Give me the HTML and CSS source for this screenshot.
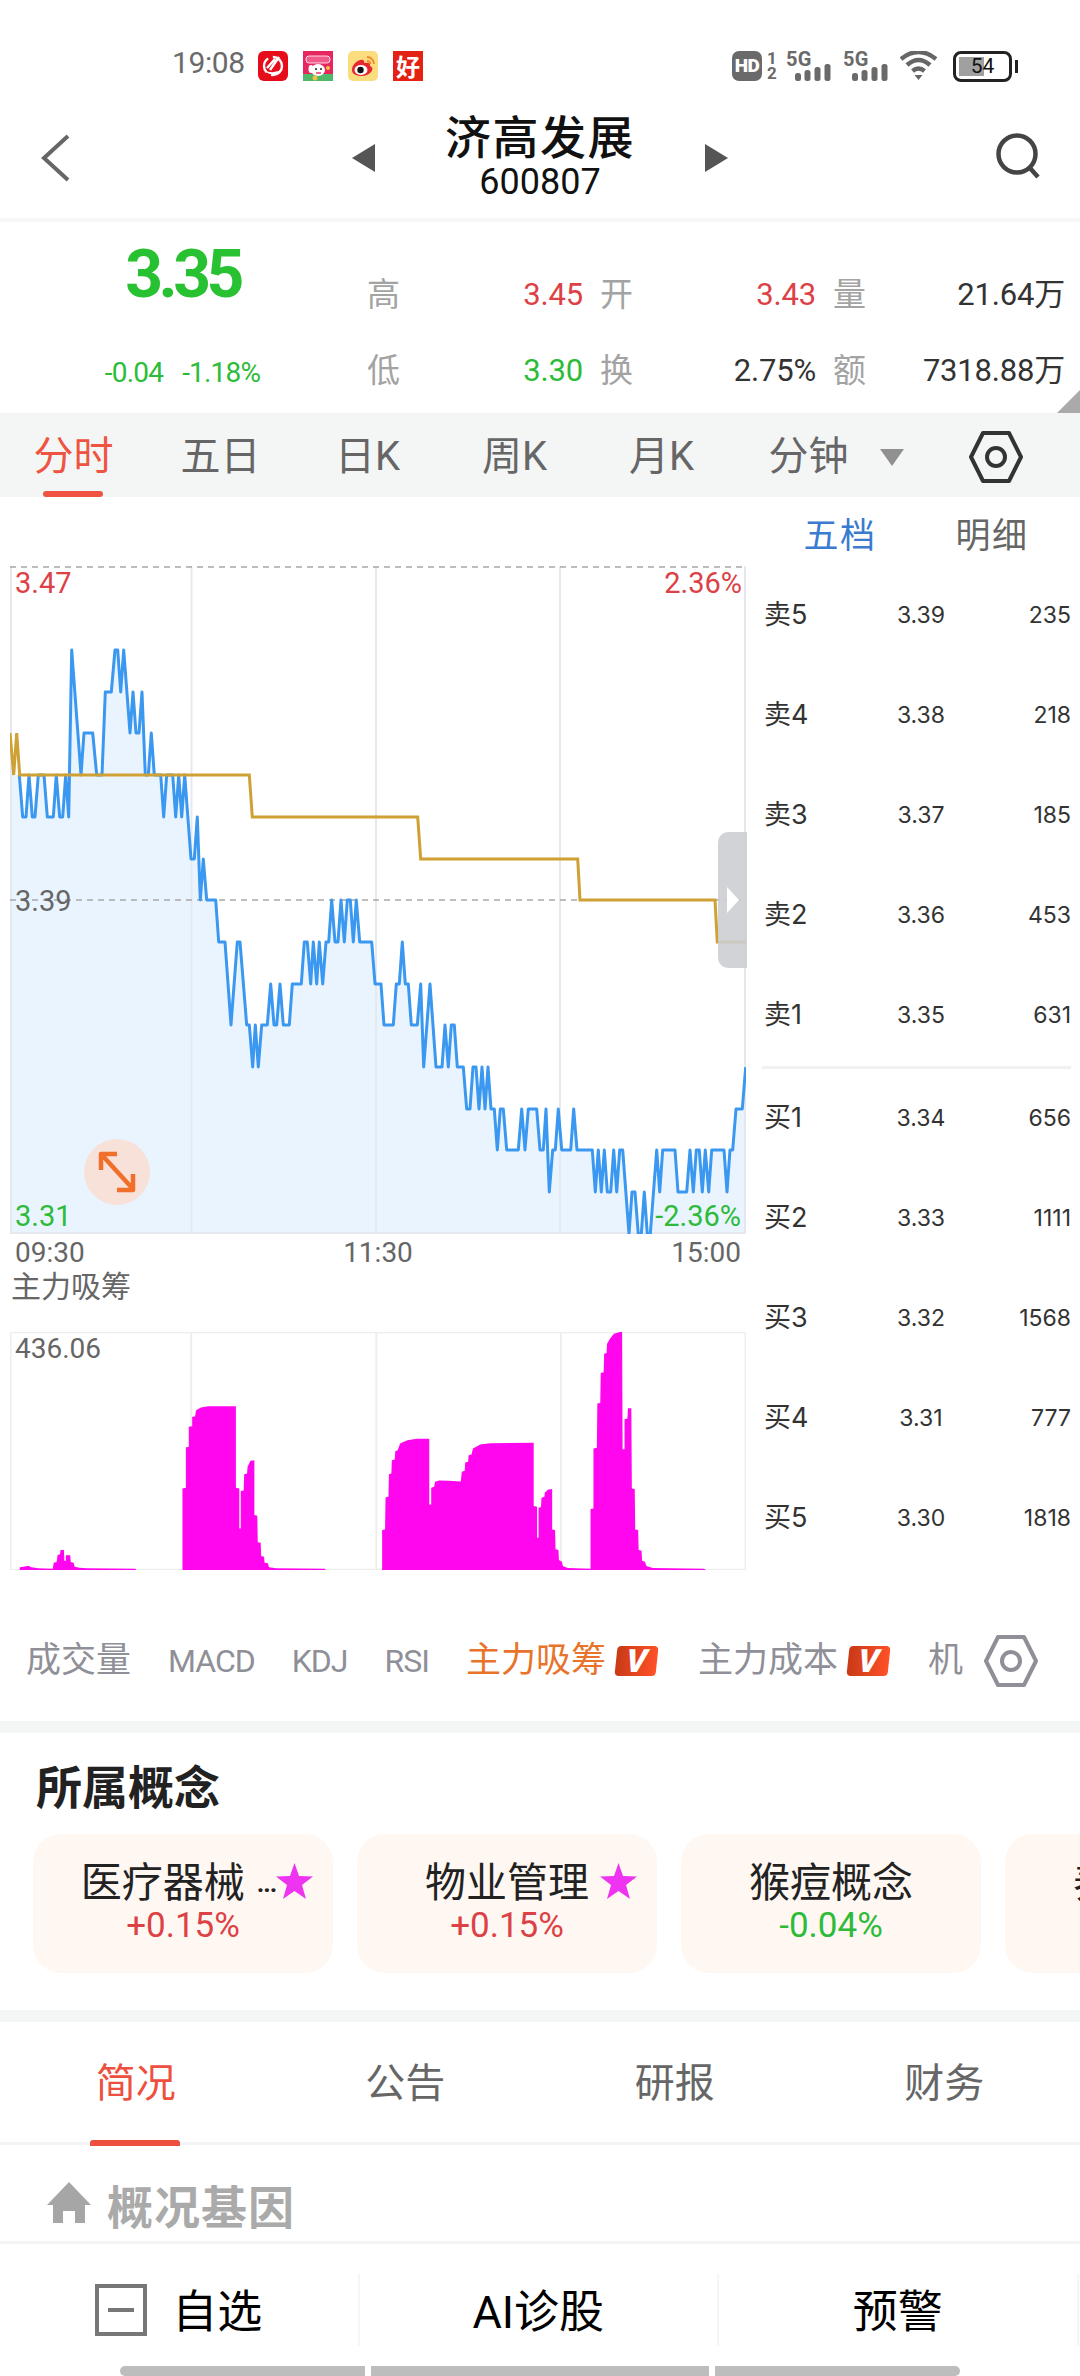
FILE: index.html
```html
<!DOCTYPE html>
<html lang="zh-CN">
<head>
<meta charset="utf-8">
<title>济高发展</title>
<link rel="stylesheet" href="styles.css">
</head>
<body>
<div class="page">
  <div class="status">
    <span class="time">19:08</span>
    <div class="apps">
      <svg class="app" viewBox="0 0 30 30"><rect width="30" height="30" rx="6" fill="#e60c1a"/><circle cx="15" cy="15" r="9" fill="none" stroke="#fff" stroke-width="2.4" stroke-dasharray="16 5"/><path d="M21 6 L12 19 M17 8 L9 17" stroke="#fff" stroke-width="2.4" fill="none"/><path d="M6 19 Q14 28 25 18 Q15 24 6 19Z" fill="#fff"/></svg>
      <svg class="app" viewBox="0 0 30 30"><rect width="30" height="30" fill="#e5265f"/><rect y="23" width="30" height="7" fill="#4fb86b"/><rect x="3" y="5" width="24" height="7" rx="3" fill="#f15a8a" stroke="#fff" stroke-width=".8"/><ellipse cx="15" cy="19" rx="7" ry="6" fill="#fff"/><ellipse cx="8" cy="18" rx="2.5" ry="4" fill="#fff"/><circle cx="13" cy="18" r="1" fill="#222"/><circle cx="18" cy="18" r="1" fill="#222"/><path d="M13 22h5" stroke="#e5265f" stroke-width="1.4"/><circle cx="12" cy="27" r="2.5" fill="#f6c143"/><circle cx="25" cy="17" r="2" fill="#f6c143"/></svg>
      <svg class="app" viewBox="0 0 30 30"><rect width="30" height="30" rx="5" fill="#fbdd80"/><path d="M4 19 C4 13 11 8 15 9 C17 10 16 12 16 12 C20 11 23 12 22 15 C25 16 25 19 23 21 C20 25 13 26 8 24 C5 23 4 21 4 19Z" fill="#e8262d"/><ellipse cx="13" cy="19" rx="6.5" ry="5" fill="#fff"/><circle cx="12.5" cy="19" r="3.2" fill="#111"/><path d="M19 6 A7 7 0 0 1 26 13 M19 10 A3.5 3.5 0 0 1 22.500 13" fill="none" stroke="#ee8a2d" stroke-width="1.800"/></svg>
      <span class="app app-hao">好</span>
    </div>
    <div class="sys">
      <span class="hd">HD</span>
      <span class="sims"><span>1</span><span>2</span></span>
      <div class="sig"><span class="sig-text">5G</span><svg class="sig-bars" viewBox="0 0 36 17"><rect x="0" y="9" width="6" height="8" rx="2.500"/><rect x="9.500" y="6" width="6" height="11" rx="2.500"/><rect x="19.500" y="3" width="6" height="14" rx="2.500"/><rect x="29.500" y="0" width="6" height="17" rx="2.500"/></svg></div>
      <div class="sig"><span class="sig-text">5G</span><svg class="sig-bars" viewBox="0 0 36 17"><rect x="0" y="9" width="6" height="8" rx="2.500"/><rect x="9.500" y="6" width="6" height="11" rx="2.500"/><rect x="19.500" y="3" width="6" height="14" rx="2.500"/><rect x="29.500" y="0" width="6" height="17" rx="2.500"/></svg></div>
      <svg class="wifi" viewBox="0 0 37 29"><path d="M1 8 Q18.500 -6 36 8" fill="none" stroke="#666" stroke-width="4.500"/><path d="M7 14 Q18.500 4 30 14" fill="none" stroke="#666" stroke-width="4.500"/><path d="M12.500 20 Q18.500 15 24.500 20" fill="none" stroke="#666" stroke-width="4.500"/><path d="M14.500 24 H22.500 L18.500 29Z" fill="#666"/></svg>
      <div class="battery-wrap">
        <div class="battery"><span class="battery-fill"></span><span class="battery-text">54</span></div>
        <span class="battery-nub"></span>
      </div>
    </div>
  </div>

  <header class="header">
    <div class="hdr-left">
      <svg class="back" viewBox="0 0 30 48"><path d="M27 2 L3 24 L27 46" fill="none" stroke="#666" stroke-width="4"/></svg>
    </div>
    <div class="hdr-mid">
      <span class="tri tri-left"></span>
      <div class="title-block">
        <div class="title">济高发展</div>
        <div class="code">600807</div>
      </div>
      <span class="tri tri-right"></span>
    </div>
    <div class="hdr-right">
      <svg class="search" viewBox="0 0 46 46"><circle cx="21" cy="21" r="18.500" fill="none" stroke="#444" stroke-width="4.500"/><path d="M33 34 L42 44" stroke="#444" stroke-width="4.500"/></svg>
    </div>
  </header>

  <section class="quote">
    <div class="quote-main">
      <div class="price">3.35</div>
      <div class="change"><span>-0.04</span><span>-1.18%</span></div>
    </div>
    <div class="quote-grid">
      <span class="q-label">高</span><span class="q-val up">3.45</span>
      <span class="q-label">开</span><span class="q-val up">3.43</span>
      <span class="q-label">量</span><span class="q-val end">21.64万</span>
      <span class="q-label">低</span><span class="q-val down">3.30</span>
      <span class="q-label">换</span><span class="q-val">2.75%</span>
      <span class="q-label">额</span><span class="q-val end">7318.88万</span>
    </div>
    <span class="corner"></span>
  </section>

  <nav class="periods">
    <span class="period active">分时</span>
    <span class="period">五日</span>
    <span class="period">日K</span>
    <span class="period">周K</span>
    <span class="period">月K</span>
    <span class="period">分钟</span>
    <span class="caret"></span>
    <svg class="hex hex-dark" viewBox="0 0 54 52"><path d="M2 26 L14 2 H40 L52 26 L40 50 H14Z" fill="none" stroke="#333" stroke-width="4" stroke-linejoin="round"/><circle cx="27" cy="26" r="9" fill="none" stroke="#333" stroke-width="4"/></svg>
  </nav>

  <section class="charts">
    <div class="chart-col">
      <div class="chart">
        <svg class="chart-svg" viewBox="10 566 736 668">
          <polygon class="area" points="11,775 19.3,775 22.7,817 26,817 29,775 32.3,817 35,817 38.3,775 44,775 47.3,817 53.3,817 56.3,775 59.7,817 62.7,817 65.7,775 68.7,817 71.7,650 81,775 84,733 92.7,733 96.7,775 102,775 105.3,692 111.3,692 115,650 117.7,650 120.7,692 123.7,650 130,733 133,692 136,733 139,733 142,692 145.3,775 148.3,775 151.3,733 154.3,775 160.7,775 163.7,817 166.7,775 172.7,775 175.7,817 178.7,775 181.7,817 184.7,775 191,859 194.3,859 197.3,817 200.3,900 203.3,859 206.7,900 215.7,900 218.7,942 225,942 231,1025 237.3,942 240,942 246.7,1025 249.3,1025 252.7,1067 255.3,1025 258.3,1067 261.7,1025 267.3,1025 270.7,984 274,1025 276.7,1025 280,984 283.3,1025 289.3,1025 292.3,984 301.3,984 304.3,942 307.3,942 310.7,984 313.3,942 316.7,984 319.3,942 322.7,984 326,942 328.7,942 331.7,900 335,942 338,942 341,900 344.3,942 347.3,900 350.3,900 353.3,942 356.3,900 359.7,942 371.7,942 375,984 381,984 384,1025 393.3,1025 396.3,984 399.3,984 402.3,942 405.3,984 408.3,984 411.3,1025 417.3,1025 420.7,984 423.7,1067 430,984 436,1067 442,1067 445,1025 448.3,1067 451.3,1025 454.3,1025 457.3,1067 463.3,1067 466.7,1109 470,1109 473,1067 476,1067 479,1109 482,1067 485,1109 488,1067 491,1109 494.3,1109 497.3,1150 500.3,1109 503.3,1109 506.7,1150 518.3,1150 521.7,1109 525,1150 528.3,1109 536.7,1109 540,1150 543.3,1150 546,1109 549.3,1192 552.7,1150 555.3,1150 558.3,1109 561.7,1150 570.7,1150 573.7,1109 577,1150 592.3,1150 595.3,1192 598.3,1150 601.3,1192 604.3,1150 607.3,1192 610.7,1192 613.7,1150 616.7,1192 619.7,1150 622.7,1150 629,1234 632,1192 635,1192 638.3,1234 641.3,1234 644.3,1192 647.3,1234 650.3,1234 656.7,1150 659.7,1192 662.7,1150 675,1150 678,1192 686.7,1192 690,1150 693.3,1192 696.3,1150 699.3,1150 702.3,1192 705.3,1150 708.7,1192 711.7,1150 724,1150 727,1192 730,1150 732.7,1150 736,1109 742.3,1109 745.7,1067 745.7,1234 11,1234"/>
          <path class="grid" d="M11 566V1234M191.500 566V1234M376 566V1234M560 566V1234M745 566V1234M10 1233H746"/>
          <path class="dash" d="M10 567H746M10 900H746"/>
          <polyline class="blue" points="19.3,775 22.7,817 26,817 29,775 32.3,817 35,817 38.3,775 44,775 47.3,817 53.3,817 56.3,775 59.7,817 62.7,817 65.7,775 68.7,817 71.7,650 81,775 84,733 92.7,733 96.7,775 102,775 105.3,692 111.3,692 115,650 117.7,650 120.7,692 123.7,650 130,733 133,692 136,733 139,733 142,692 145.3,775 148.3,775 151.3,733 154.3,775 160.7,775 163.7,817 166.7,775 172.7,775 175.7,817 178.7,775 181.7,817 184.7,775 191,859 194.3,859 197.3,817 200.3,900 203.3,859 206.7,900 215.7,900 218.7,942 225,942 231,1025 237.3,942 240,942 246.7,1025 249.3,1025 252.7,1067 255.3,1025 258.3,1067 261.7,1025 267.3,1025 270.7,984 274,1025 276.7,1025 280,984 283.3,1025 289.3,1025 292.3,984 301.3,984 304.3,942 307.3,942 310.7,984 313.3,942 316.7,984 319.3,942 322.7,984 326,942 328.7,942 331.7,900 335,942 338,942 341,900 344.3,942 347.3,900 350.3,900 353.3,942 356.3,900 359.7,942 371.7,942 375,984 381,984 384,1025 393.3,1025 396.3,984 399.3,984 402.3,942 405.3,984 408.3,984 411.3,1025 417.3,1025 420.7,984 423.7,1067 430,984 436,1067 442,1067 445,1025 448.3,1067 451.3,1025 454.3,1025 457.3,1067 463.3,1067 466.7,1109 470,1109 473,1067 476,1067 479,1109 482,1067 485,1109 488,1067 491,1109 494.3,1109 497.3,1150 500.3,1109 503.3,1109 506.7,1150 518.3,1150 521.7,1109 525,1150 528.3,1109 536.7,1109 540,1150 543.3,1150 546,1109 549.3,1192 552.7,1150 555.3,1150 558.3,1109 561.7,1150 570.7,1150 573.7,1109 577,1150 592.3,1150 595.3,1192 598.3,1150 601.3,1192 604.3,1150 607.3,1192 610.7,1192 613.7,1150 616.7,1192 619.7,1150 622.7,1150 629,1234 632,1192 635,1192 638.3,1234 641.3,1234 644.3,1192 647.3,1234 650.3,1234 656.7,1150 659.7,1192 662.7,1150 675,1150 678,1192 686.7,1192 690,1150 693.3,1192 696.3,1150 699.3,1150 702.3,1192 705.3,1150 708.7,1192 711.7,1150 724,1150 727,1192 730,1150 732.7,1150 736,1109 742.3,1109 745.7,1067"/>
          <polyline class="gold" points="10,733 13.700,775 16.700,733 19.700,775 249.300,775 252.300,817 417.700,817 420.700,859 577.700,859 580,900 715,900 717.300,942 745.700,942"/>
        </svg>
        <span class="lbl lbl-tl up">3.47</span>
        <span class="lbl lbl-tr up">2.36%</span>
        <span class="lbl lbl-ml">3.39</span>
        <span class="lbl lbl-bl down">3.31</span>
        <span class="lbl lbl-br down">-2.36%</span>
        <span class="expand"><svg viewBox="0 0 66 66"><path d="M17 31V15H33M17 15L49 50M49 35V51H33" fill="none" stroke="#f0702b" stroke-width="4.500" stroke-linejoin="round"/></svg></span>
        <span class="handle"><span class="handle-arrow"></span></span>
      </div>
      <div class="times"><span>09:30</span><span>11:30</span><span>15:00</span></div>
      <div class="sub-title">主力吸筹</div>
      <div class="subchart">
        <svg class="sub-svg" viewBox="22 35 1515 715" preserveAspectRatio="none">
          <path class="sub-grid" d="M23 35V750M395 35V750M776 35V750M1156 35V750M1536 35V750M22 36H1537M22 749H1537"/>
          <path class="mag" d="M42,750 L42,742 L50,740 L60,737 L66,742 L80,745 L110,746 L112,728 L118,726 L120,705 L125,703 L126,690 L133,690 L134,722 L137,722 L137,706 L146,706 L147,726 L153,728 L155,740 L165,743 L180,745 L280,746 L282,750 Z"/>
          <path class="mag" d="M377,750 L377,505 L384,503 L384,382 L390,380 L390,320 L397,318 L397,290 L403,288 L405,270 L415,262 L430,258 L487,258 L487,503 L494,505 L494,625 L497,625 L497,513 L503,511 L504,462 L510,460 L511,440 L517,422 L525,420 L525,585 L531,587 L532,667 L538,668 L539,708 L545,710 L546,728 L553,730 L555,742 L570,745 L670,746 L672,750 Z"/>
          <path class="mag" d="M788,750 L788,630 L794,628 L795,532 L801,530 L802,462 L807,460 L808,420 L814,418 L815,393 L820,390 L825,370 L840,360 L860,356 L885,356 L885,553 L889,553 L889,503 L895,500 L897,485 L905,481 L925,482 L950,484 L952,455 L958,452 L959,427 L965,425 L966,405 L972,403 L975,385 L990,373 L1010,369 L1100,368 L1100,558 L1107,560 L1107,653 L1110,653 L1110,563 L1115,561 L1116,533 L1122,530 L1123,517 L1130,508 L1138,507 L1138,628 L1144,630 L1145,688 L1151,690 L1152,720 L1158,725 L1160,738 L1170,744 L1217,746 L1217,567 L1223,565 L1223,385 L1230,383 L1231,250 L1237,248 L1238,158 L1244,156 L1245,100 L1250,98 L1251,70 L1257,55 L1265,40 L1282,33 L1283,387 L1287,387 L1287,297 L1293,295 L1294,264 L1301,264 L1302,505 L1308,507 L1309,628 L1315,630 L1316,690 L1322,692 L1323,722 L1329,725 L1332,738 L1345,744 L1450,746 L1455,750 Z"/>
        </svg>
        <span class="sub-lbl">436.06</span>
      </div>
    </div>

    <aside class="book">
      <div class="book-tabs"><span class="book-tab active">五档</span><span class="book-tab">明细</span></div>
      <div class="book-row"><span class="b-name">卖5</span><span class="b-price">3.39</span><span class="b-vol">235</span></div>
      <div class="book-row"><span class="b-name">卖4</span><span class="b-price">3.38</span><span class="b-vol">218</span></div>
      <div class="book-row"><span class="b-name">卖3</span><span class="b-price">3.37</span><span class="b-vol">185</span></div>
      <div class="book-row"><span class="b-name">卖2</span><span class="b-price">3.36</span><span class="b-vol">453</span></div>
      <div class="book-row"><span class="b-name">卖1</span><span class="b-price">3.35</span><span class="b-vol">631</span></div>
      <div class="book-div"></div>
      <div class="book-row"><span class="b-name">买1</span><span class="b-price">3.34</span><span class="b-vol">656</span></div>
      <div class="book-row"><span class="b-name">买2</span><span class="b-price">3.33</span><span class="b-vol">1111</span></div>
      <div class="book-row"><span class="b-name">买3</span><span class="b-price">3.32</span><span class="b-vol">1568</span></div>
      <div class="book-row"><span class="b-name">买4</span><span class="b-price">3.31</span><span class="b-vol">777</span></div>
      <div class="book-row"><span class="b-name">买5</span><span class="b-price">3.30</span><span class="b-vol">1818</span></div>
    </aside>
  </section>

  <nav class="indicators">
    <span class="ind">成交量</span>
    <span class="ind ind-latin">MACD</span>
    <span class="ind ind-latin">KDJ</span>
    <span class="ind ind-latin">RSI</span>
    <span class="ind ind-active">主力吸筹<span class="vip">V</span></span>
    <span class="ind ind-cost">主力成本<span class="vip">V</span></span>
    <span class="ind ind-last">机</span>
    <svg class="hex hex-grey" viewBox="0 0 54 52"><path d="M2 26 L14 2 H40 L52 26 L40 50 H14Z" fill="none" stroke="#8f8f98" stroke-width="4" stroke-linejoin="round"/><circle cx="27" cy="26" r="9" fill="none" stroke="#8f8f98" stroke-width="4"/></svg>
  </nav>

  <div class="gap"></div>

  <section class="concepts">
    <h2 class="concepts-title">所属概念</h2>
    <div class="cards">
      <div class="card">
        <div class="card-name card-name-cut"><span>医疗器械</span><span class="more">...</span></div>
        <svg class="star" viewBox="0 0 37 36"><polygon points="18.500,0 23,13 37,13.500 26,22 30,36 18.500,28 7,36 11,22 0,13.500 14,13"/></svg>
        <div class="card-pct up">+0.15%</div>
      </div>
      <div class="card">
        <div class="card-name"><span>物业管理</span></div>
        <svg class="star" viewBox="0 0 37 36"><polygon points="18.500,0 23,13 37,13.500 26,22 30,36 18.500,28 7,36 11,22 0,13.500 14,13"/></svg>
        <div class="card-pct up">+0.15%</div>
      </div>
      <div class="card">
        <div class="card-name"><span>猴痘概念</span></div>
        <div class="card-pct down">-0.04%</div>
      </div>
      <div class="card">
        <div class="card-name"><span>养老概念</span></div>
      </div>
    </div>
  </section>

  <div class="gap gap-two"></div>

  <nav class="subtabs">
    <span class="subtab active">简况</span>
    <span class="subtab">公告</span>
    <span class="subtab">研报</span>
    <span class="subtab">财务</span>
  </nav>

  <div class="gene">
    <svg class="home" viewBox="0 0 44 41"><path d="M22 0 L44 23 H38 V41 H28 V29 H16 V41 H6 V23 H0Z" fill="#a6a6a6"/></svg>
    <span class="gene-text">概况基因</span>
  </div>

  <footer class="footer">
    <div class="foot-item">
      <svg class="minus" viewBox="0 0 52 52"><rect x="2" y="2" width="48" height="48" fill="none" stroke="#777" stroke-width="4"/><path d="M13 26H39" stroke="#777" stroke-width="4"/></svg>
      <span>自选</span>
    </div>
    <div class="foot-item">AI诊股</div>
    <div class="foot-item">预警</div>
  </footer>
  <div class="gesture"><span class="g1"></span><span class="g2"></span><span class="g3"></span></div>
</div>
</body>
</html>
```
FILE: styles.css
```css
* { box-sizing: border-box; margin: 0; padding: 0; }
html, body { background: #fff; }
body { font-family: Roboto, "Noto Sans CJK SC", sans-serif; }
.page { width: 1080px; height: 2376px; overflow: hidden; display: flex; flex-direction: column; position: relative; }
.up { color: #dc4146; }
.down { color: #2dbb39; }

/* status bar */
.status { height: 90px; flex: none; display: flex; align-items: flex-start; padding: 51px 62px 0 172px; }
.time { width: 86px; font-size: 30px; line-height: 24px; color: #6a6a6a; letter-spacing: -.4px; }
.apps { display: flex; gap: 15px; }
.app { width: 30px; height: 30px; display: block; }
.app-hao { background: #e32214; color: #fff; font: 700 24px/30px "Noto Sans CJK SC", sans-serif; text-align: center; }
.sys { margin-left: auto; display: flex; align-items: flex-start; }
.hd { width: 30px; height: 30px; border-radius: 7px; background: #6a6a6a; color: #fff; font: 900 19px/30px Roboto, sans-serif; letter-spacing: -.5px; text-align: center; }
.sims { display: flex; flex-direction: column; margin-left: 5px; width: 19px; font: 700 17px/15px Roboto, sans-serif; color: #6a6a6a; }
.sig { position: relative; width: 44px; height: 30px; margin-right: 13px; color: #6a6a6a; }
.sig-text { position: absolute; left: 0; top: 0; font: 700 20px/17px Roboto, sans-serif; letter-spacing: .2px; }
.sig-bars { position: absolute; left: 9px; bottom: 0; width: 36px; height: 17px; fill: #6a6a6a; display: block; }
.wifi { width: 37px; height: 29px; margin-right: 16px; display: block; }
.battery-wrap { display: flex; align-items: center; }
.battery { position: relative; width: 59px; height: 31px; border: 3px solid #222; border-radius: 8px; }
.battery-fill { position: absolute; left: 3px; top: 3px; bottom: 3px; width: 25px; background: #a0a0a0; }
.battery-text { position: absolute; inset: 0; text-align: center; font: 400 21px/25px Roboto, sans-serif; color: #111; }
.battery-nub { width: 3px; height: 13px; background: #222; margin-left: 3px; }

/* header */
.header { height: 132px; flex: none; display: grid; grid-template-columns: 1fr auto 1fr; align-items: center; border-bottom: 4px solid #f6f7f7; }
.hdr-left { padding-left: 41px; display: flex; padding-top: 8px; }
.back { width: 30px; height: 48px; display: block; }
.hdr-mid { width: 376px; display: flex; align-items: center; justify-content: space-between; }
.hdr-right { display: flex; justify-content: flex-end; padding-right: 38px; padding-top: 3px; }
.search { width: 46px; height: 46px; display: block; }
.tri { width: 0; height: 0; border-top: 14px solid transparent; border-bottom: 14px solid transparent; margin-top: 8px; }
.tri-left { border-right: 23px solid #555; }
.tri-right { border-left: 23px solid #555; }
.title-block { text-align: center; color: #111; }
.title { font: 500 46px/50px "Noto Sans CJK SC", sans-serif; letter-spacing: 1.500px; }
.code { font-size: 36px; line-height: 40px; margin-top: 3px; margin-bottom: -3px; }

/* quote */
.quote { height: 191px; flex: none; display: flex; position: relative; }
.quote-main { width: 367px; flex: none; padding-right: 2px; text-align: center; }
.price { margin-top: 15px; font-weight: 700; font-size: 66px; line-height: 76px; letter-spacing: -4.500px; color: #28c131; }
.change { margin-top: 43px; display: flex; justify-content: center; gap: 19px; font-size: 28px; line-height: 34px; letter-spacing: -.8px; color: #2dbb39; }
.quote-grid { display: grid; grid-template-columns: 33px 200px 33px 200px 33px 199px; grid-auto-rows: 76px; padding-top: 53px; }
.q-label { font-size: 33px; line-height: 40px; color: #a3a3a3; white-space: nowrap; }
.q-val { font-size: 31px; line-height: 40px; text-align: right; padding-right: 17px; white-space: nowrap; color: #333; letter-spacing: -.2px; }
.q-val.up { color: #dc4146; }
.q-val.down { color: #2dbb39; }
.q-val.end { padding-right: 0; }
.corner { position: absolute; right: 0; bottom: 0; width: 0; height: 0; border-left: 23px solid transparent; border-bottom: 23px solid #aaa; }

/* period tabs */
.periods { height: 84px; flex: none; background: #f4f6f6; display: flex; align-items: center; padding-top: 4px; }
.period { width: 147px; text-align: center; font-size: 40px; line-height: 52px; color: #666; position: relative; }
.period.active { color: #ef5341; }
.period.active::after { content: ""; position: absolute; left: 43px; top: 60px; width: 60px; height: 6px; border-radius: 3px; background: #ef5341; }
.caret { width: 0; height: 0; margin-left: -2px; border-left: 12px solid transparent; border-right: 12px solid transparent; border-top: 17px solid #909090; }
.hex { display: block; flex: none; }
.hex-dark { width: 54px; height: 52px; margin-left: 65px; }

/* charts */
.charts { height: 1093px; flex: none; display: flex; }
.chart-col { width: 762px; flex: none; padding: 69px 0 0 10px; }
.chart { position: relative; width: 736px; height: 668px; }
.chart-svg { display: block; width: 736px; height: 668px; }
.area { fill: #eaf4ff; }
.grid { fill: none; stroke: #e5e9ef; stroke-width: 2; }
.dash { fill: none; stroke: #a8a8a8; stroke-width: 1.500; stroke-dasharray: 6 5; }
.blue { fill: none; stroke: #3a98f0; stroke-width: 3; stroke-linejoin: round; }
.gold { fill: none; stroke: #cfa033; stroke-width: 3; }
.lbl { position: absolute; font-size: 29px; line-height: 32px; white-space: nowrap; }
.lbl-tl { left: 5px; top: 1px; }
.lbl-tr { right: 4px; top: 1px; }
.lbl-ml { left: 5px; top: 319px; color: #666; }
.lbl-bl { left: 5px; top: 634px; }
.lbl-br { right: 5px; top: 634px; }
.expand { position: absolute; left: 74px; top: 573px; width: 66px; height: 66px; border-radius: 50%; background: #f8e1d9; }
.expand svg { display: block; width: 66px; height: 66px; }
.handle { position: absolute; left: 708px; top: 266px; width: 29px; height: 136px; border-radius: 10px 0 0 10px; background: rgba(204, 205, 209, .88); display: flex; align-items: center; padding-left: 9px; }
.handle-arrow { width: 0; height: 0; border-top: 13px solid transparent; border-bottom: 13px solid transparent; border-left: 12px solid #fff; margin-top: -1px; }
.times { height: 34px; display: flex; justify-content: space-between; padding: 3px 5px 0; width: 736px; font-size: 28px; line-height: 32px; color: #666; }
.sub-title { height: 38px; margin-left: 1px; font-size: 30px; line-height: 38px; color: #666; }
.subchart { position: relative; width: 736px; height: 238px; margin-top: 26px; }
.sub-svg { display: block; width: 736px; height: 238px; }
.sub-grid { fill: none; stroke: #eeeeee; stroke-width: 2; vector-effect: non-scaling-stroke; }
.mag { fill: #ff06ee; }
.sub-lbl { position: absolute; left: 5px; top: 1px; font-size: 28px; line-height: 32px; color: #666; }

/* order book */
.book { width: 309px; flex: none; }
.book-tabs { height: 68px; display: grid; grid-template-columns: 152px 152px; padding-left: 2px; }
.book-tab { text-align: center; font-size: 35px; line-height: 79px; letter-spacing: 1.500px; color: #666; }
.book-tab.active { color: #3a7bd0; }
.book-row { height: 100px; display: grid; grid-template-columns: 102px 114px 93px; align-items: center; color: #333; font-family: Inter, "Noto Sans CJK SC", sans-serif; font-size: 23px; }
.b-name { padding-left: 2px; font-size: 27px; line-height: 34px; margin-top: -1px; }
.b-price { text-align: center; }
.b-vol { text-align: right; }
.book-div { height: 3px; background: #f1f1f1; margin-top: 1px; margin-bottom: -1px; }

/* indicators */
.indicators { height: 131px; flex: none; display: flex; align-items: center; gap: 37px; padding: 10px 43px 0 26px; color: #8f8f98; }
.ind { display: flex; align-items: center; font-size: 35px; line-height: 44px; white-space: nowrap; flex: none; }
.ind-latin { font-size: 32px; letter-spacing: -1px; }
.ind-active { color: #e8732a; }
.ind-cost { margin-left: 4px; }
.ind-last { margin-left: 2px; }
.vip { width: 41px; height: 30px; margin-left: 10px; border-radius: 4px; background: linear-gradient(90deg, #c83a16, #ff5128); color: #fff; font: italic 900 32px/30px Roboto, sans-serif; text-align: center; transform: skewX(-6deg); }
.hex-grey { width: 54px; height: 52px; margin-left: -16px; }
.gap { height: 12px; flex: none; background: #f4f6f6; }

/* concepts */
.concepts { height: 277px; flex: none; padding-left: 33px; overflow: hidden; }
.concepts-title { padding: 21px 0 0 3px; font: 700 46px/60px "Noto Sans CJK SC", sans-serif; color: #222; }
.cards { display: flex; gap: 24px; margin-top: 20px; }
.card { position: relative; width: 300px; height: 139px; flex: none; border-radius: 28px; background: #fff7f2; text-align: center; padding-top: 24px; }
.card-name { display: flex; justify-content: center; align-items: center; font-size: 41px; line-height: 50px; color: #222; white-space: nowrap; }
.card-name-cut { padding-right: 9px; }
.card-pct { font-size: 35px; line-height: 38px; margin-top: -1px; }
.more { font-size: 26px; line-height: 50px; margin-left: 12px; font-weight: 700; letter-spacing: -1px; }
.star { position: absolute; left: 243px; top: 29px; width: 37px; height: 36px; fill: #ee34f0; display: block; }

/* subtabs */
.subtabs { height: 123px; flex: none; display: grid; grid-template-columns: repeat(4, 269.500px); padding-left: 1px; border-bottom: 3px solid #f2f4f4; }
.subtab { text-align: center; font-size: 40px; line-height: 124px; color: #666; position: relative; }
.subtab.active { color: #ee5040; }
.subtab.active::after { content: ""; position: absolute; left: 89px; bottom: 0; width: 90px; height: 6px; border-radius: 3px 3px 0 0; background: #ee5040; }
.gene { height: 99px; flex: none; display: flex; align-items: center; padding: 21px 0 0 47px; gap: 16px; border-bottom: 3px solid #f2f4f4; }
.home { width: 44px; height: 41px; display: block; margin-top: -3px; }
.gene-text { font: 700 46px/60px "Noto Sans CJK SC", sans-serif; color: #aaa; letter-spacing: 1px; }

/* footer */
.footer { height: 122px; flex: none; display: flex; padding-top: 30px; }
.foot-item { width: 359.500px; height: 72px; display: flex; align-items: center; justify-content: center; gap: 25px; padding-bottom: 3px; border-right: 2px solid #f6f6f6; font-size: 45px; color: #000; white-space: nowrap; }
.minus { width: 52px; height: 52px; display: block; margin-top: 3px; }
.gesture { position: absolute; left: 120px; bottom: 0; display: flex; gap: 6px; }
.gesture span { height: 10px; background: #bdbdbd; display: block; }
.g1 { width: 245px; border-radius: 5px 0 0 5px; }
.g2 { width: 338px; }
.g3 { width: 245px; border-radius: 0 5px 5px 0; }
```
